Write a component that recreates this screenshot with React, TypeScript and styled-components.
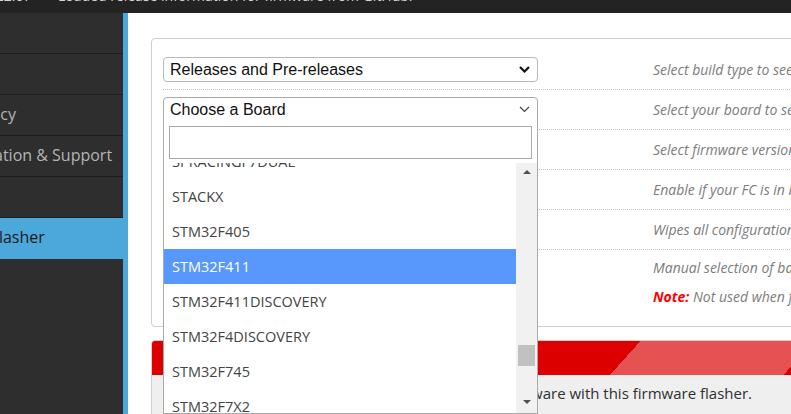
import React from 'react'
import styled, { createGlobalStyle } from 'styled-components'

const GlobalStyle = createGlobalStyle`
  html, body {
    margin: 0;
    padding: 0;
    background: #fff;
    overflow: hidden;
  }
  body {
    font-family: 'Open Sans', 'DejaVu Sans', sans-serif;
  }
  * { box-sizing: border-box; }
`

const Page = styled.div`
  width: 791px;
  height: 414px;
  display: flex;
  flex-direction: column;
  overflow: hidden;
`

// log strip at the top, only the bottom of the last line shows
const LogBar = styled.div`
  height: 13px;
  flex: none;
  background: #232323;
  overflow: hidden;
`

const LogLine = styled.div`
  margin-top: -14px;
  display: flex;
  white-space: nowrap;
  font-size: 14px;
  line-height: 20px;
  color: #d6d6d6;
`

const Stamp = styled.span`
  margin-left: -24px;
  width: 82px;
`

const Body = styled.div`
  flex: 1;
  display: flex;
  min-height: 0;
`

const Sidebar = styled.nav`
  width: 128px;
  flex: none;
  background: #2e2e2e;
  border-right: 5px solid #4ca7da;
  overflow: hidden;
`

const NavItem = styled.div<{ $active?: boolean }>`
  height: 41px;
  display: flex;
  align-items: center;
  white-space: nowrap;
  font-size: 16px;
  padding-bottom: 2px;
  border-bottom: 1px solid ${p => (p.$active ? '#4ca7da' : '#1d1d1d')};
  color: ${p => (p.$active ? '#1b1b1b' : '#b4b4b4')};
  background: ${p => (p.$active ? '#4ca7da' : 'transparent')};
`

const NavLabel = styled.span`
  margin-left: -84px;
`

const Main = styled.main`
  flex: 1;
  padding: 25px 0 0 23px;
  overflow: hidden;
`

const Panel = styled.section`
  width: 700px;
  border: 1px solid #cfcfcf;
  border-radius: 4px;
  padding: 11px 0 0 11px;
`

const Row = styled.div<{ $last?: boolean }>`
  display: grid;
  grid-template-columns: 375px 1fr;
  column-gap: 115px;
  align-items: ${p => (p.$last ? 'start' : 'center')};
  height: ${p => (p.$last ? '76px' : '40px')};
  border-bottom: ${p => (p.$last ? 'none' : '1px dotted #c4c4c4')};
  padding-top: ${p => (p.$last ? '8px' : '0')};
`

const Desc = styled.div`
  display: flex;
  flex-direction: column;
  gap: 9px;
  font-size: 14px;
  line-height: 20px;
  font-style: italic;
  color: #7c7c7c;
  white-space: nowrap;
`

const Note = styled.span`
  color: #f00;
  font-weight: 700;
`

const SelectBox = styled.div<{ $open?: boolean }>`
  position: relative;
  height: 25px;
  display: flex;
  align-items: center;
  justify-content: space-between;
  padding: 0 7px 0 6px;
  border: 1px solid ${p => (p.$open ? '#aaa' : '#b9b9b9')};
  border-radius: ${p => (p.$open ? '4px 4px 0 0' : '4px')};
  background: #fff;
  font-family: 'Liberation Sans', Arial, sans-serif;
  font-size: 16px;
  color: #111;
`

const Dropdown = styled.div`
  position: absolute;
  top: 100%;
  left: -1px;
  right: -1px;
  z-index: 5;
  background: #fff;
  border: 1px solid #aaa;
  border-top: none;
  font-family: 'Open Sans', sans-serif;
`

const SearchWrap = styled.div`
  padding: 5px 5px 4px;
`

const Search = styled.input`
  display: block;
  width: 100%;
  height: 33px;
  border: 1px solid #aaa;
  outline: none;
  background: #fff;
`

const ListViewport = styled.div`
  height: 250px;
  display: flex;
`

const Options = styled.div`
  flex: 1;
  overflow: hidden;
`

const OptionsInner = styled.div`
  margin-top: -19px;
`

const Option = styled.div<{ $hl?: boolean }>`
  height: 35px;
  display: flex;
  align-items: center;
  padding-left: 8px;
  font-size: 14.5px;
  color: ${p => (p.$hl ? '#fff' : '#444')};
  background: ${p => (p.$hl ? '#5897fb' : 'transparent')};
`

const ScrollTrack = styled.div`
  width: 21px;
  flex: none;
  background: #f1f1f1;
  display: flex;
  flex-direction: column;
  align-items: center;
  padding-bottom: 3px;
`

const ScrollBtn = styled.div<{ $down?: boolean }>`
  height: 17px;
  flex: none;
  display: flex;
  align-items: center;
  justify-content: center;

  &:after {
    content: '';
    border-left: 4px solid transparent;
    border-right: 4px solid transparent;
    ${p => (p.$down ? 'border-top: 4px solid #505050;' : 'border-bottom: 4px solid #505050;')}
  }
`

const Rail = styled.div`
  flex: 1;
  width: 100%;
  padding: 0 2px;
`

const Thumb = styled.div`
  margin-top: 165px;
  height: 21px;
  background: #c1c1c1;
`

const Warning = styled.div`
  margin-top: 13px;
  width: 700px;
  border: 1px solid #cfcfcf;
  border-radius: 4px;
  overflow: hidden;
  background: #efefef;
`

const WarnHead = styled.div`
  height: 34px;
  background: linear-gradient(132deg, #dd0000 363px, #e65252 363px, #e65252 492px, #dd0000 492px);
`

const WarnBody = styled.div`
  padding: 8px 10px 20px 57px;
  font-size: 15px;
  line-height: 20px;
  color: #303030;
  white-space: nowrap;
`

const Chevron = ({ bold }: { bold?: boolean }) => (
  <svg width="11" height="7" viewBox="0 0 11 7">
    <path
      d="M1 1 L5.5 5.5 L10 1"
      fill="none"
      stroke={bold ? '#111' : '#444'}
      strokeWidth={bold ? 2.2 : 1.2}
    />
  </svg>
)

const navItems = ['Welcome', 'Options', 'Privacy Policy', 'Documentation & Support', 'Help', 'Firmware Flasher']

const boards = [
  'SPRACINGF7DUAL',
  'STACKX',
  'STM32F405',
  'STM32F411',
  'STM32F411DISCOVERY',
  'STM32F4DISCOVERY',
  'STM32F745',
  'STM32F7X2',
  'STM32F7X2_OSD',
]

const App: React.FC = () => {
  return (
    <Page>
      <GlobalStyle />
      <LogBar>
        <LogLine>
          <Stamp>14:22:07</Stamp>
          <span>Loaded release information for firmware from GitHub.</span>
        </LogLine>
      </LogBar>
      <Body>
        <Sidebar>
          {navItems.map(item => (
            <NavItem key={item} $active={item === 'Firmware Flasher'}>
              <NavLabel>{item}</NavLabel>
            </NavItem>
          ))}
        </Sidebar>
        <Main>
          <Panel>
            <Row>
              <SelectBox>
                Releases and Pre-releases
                <Chevron bold />
              </SelectBox>
              <Desc>Select build type to see available boards.</Desc>
            </Row>
            <Row>
              <SelectBox $open>
                Choose a Board
                <Chevron />
                <Dropdown>
                  <SearchWrap>
                    <Search type="text" />
                  </SearchWrap>
                  <ListViewport>
                    <Options>
                      <OptionsInner>
                        {boards.map(b => (
                          <Option key={b} $hl={b === 'STM32F411'}>{b}</Option>
                        ))}
                      </OptionsInner>
                    </Options>
                    <ScrollTrack>
                      <ScrollBtn />
                      <Rail>
                        <Thumb />
                      </Rail>
                      <ScrollBtn $down />
                    </ScrollTrack>
                  </ListViewport>
                </Dropdown>
              </SelectBox>
              <Desc>Select your board to see available online firmware releases - Select the correct firmware appropriate for your board.</Desc>
            </Row>
            <Row>
              <div />
              <Desc>Select firmware version for your board.</Desc>
            </Row>
            <Row>
              <div />
              <Desc>Enable if your FC is in bootloader mode (DFU) already.</Desc>
            </Row>
            <Row>
              <div />
              <Desc>Wipes all configuration data currently stored on the board.</Desc>
            </Row>
            <Row $last>
              <div />
              <Desc>
                <span>Manual selection of baud rate for boards that don't support the default speed or for flashing via bluetooth.</span>
                <span><Note>Note:</Note> Not used when flashing via USB DFU</span>
              </Desc>
            </Row>
          </Panel>
          <Warning>
            <WarnHead />
            <WarnBody>
              Please do not try to flash <b>non-Betaflight</b> hardware with this firmware flasher.
            </WarnBody>
          </Warning>
        </Main>
      </Body>
    </Page>
  )
}

export default App
